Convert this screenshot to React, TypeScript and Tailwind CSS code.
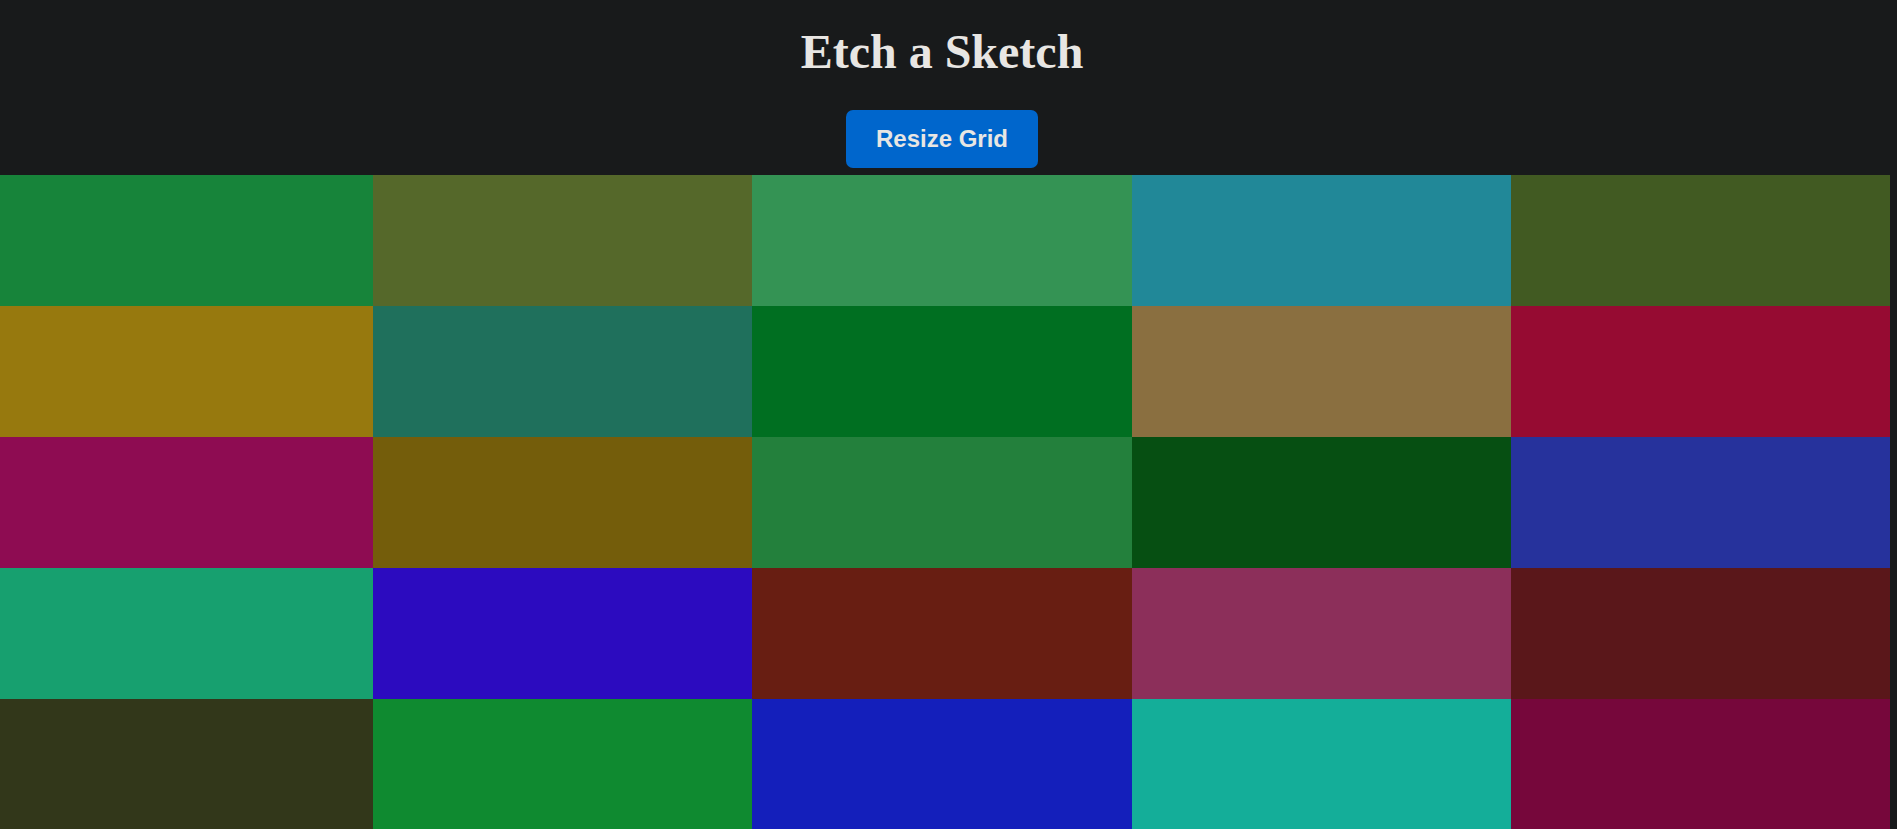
const colors = [
  "#17843a", "#55682a", "#349354", "#218898", "#415a22",
  "#97790e", "#1f705c", "#006f21", "#8a6f40", "#960b32",
  "#8e0c52", "#745d0b", "#23803c", "#064f12", "#26329c",
  "#17a06f", "#2c0bbf", "#681e12", "#8c2f5a", "#5a171a",
  "#32371a", "#0f8a30", "#141fbb", "#14ae99", "#76073b",
];

export default function App() {
  return (
    <div className="min-h-screen bg-[#181a1b] overflow-hidden">
      <div className="w-[1890px]">
        <header className="flex flex-col items-center pt-[25px] pb-[7px] pr-[6px]">
          <h1 className="font-['Liberation_Serif',serif] text-[48px] leading-[53px] font-bold text-[#e8e6e3]">
            Etch a Sketch
          </h1>
          <button className="mt-[32px] h-[58px] w-[192px] rounded-[7px] bg-[#0066cc] font-['Liberation_Sans',Arial,sans-serif] text-[24px] font-bold text-[#e8e6e3]">
            Resize Grid
          </button>
        </header>
        <div className="grid grid-cols-[373px_379px_380px_379px_379px] auto-rows-[131px]">
          {colors.map((c, i) => (
            <div key={i} style={{ backgroundColor: c }} />
          ))}
        </div>
      </div>
    </div>
  );
}
